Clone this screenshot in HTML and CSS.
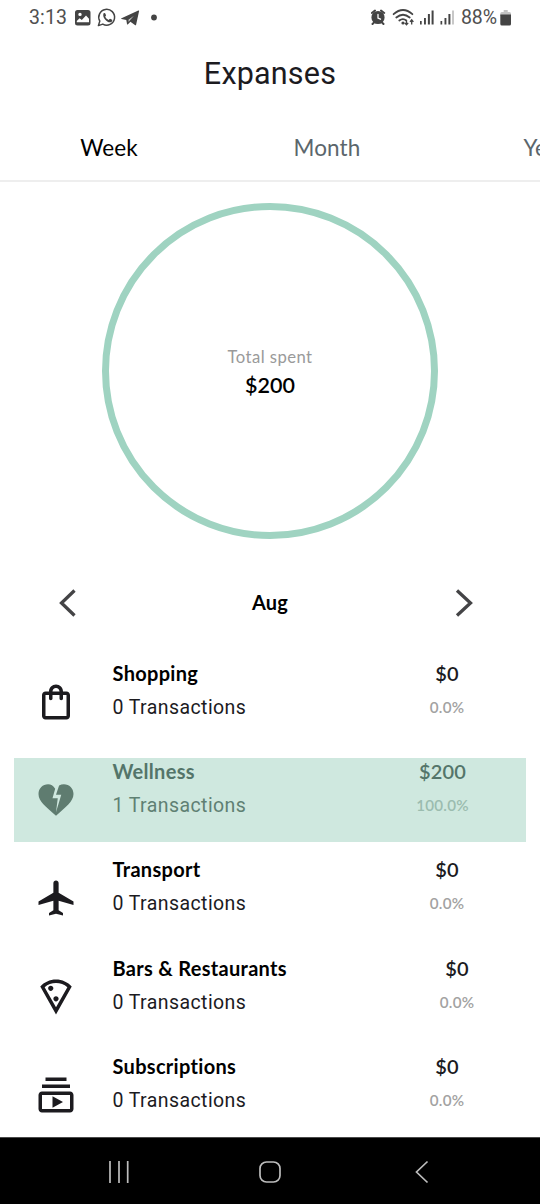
FILE: index.html
```html
<!DOCTYPE html>
<html lang="en">
<head>
<meta charset="utf-8">
<title>Expanses</title>
<link rel="stylesheet" href="styles.css">
</head>
<body>
<div class="screen">
  <header class="status">
    <span class="clock">3:13</span>
    <svg class="status-left" width="90" height="36" viewBox="0 0 90 36" fill="#444">
      <path fill-rule="evenodd" d="M7.500 10h10.500a2.500 2.500 0 0 1 2.500 2.500v10.500a2.500 2.500 0 0 1-2.500 2.500H7.500a2.500 2.500 0 0 1-2.500-2.500V12.500A2.500 2.500 0 0 1 7.500 10zM6.800 22.300h12.200v-3.500l-3-3.300-4.200 4.500-2.200-1.800-2.800 2.700zM10 12.700a1.700 1.700 0 1 0 0 3.400a1.700 1.700 0 0 0 0-3.400z"/>
      <path d="M28.400 25.600l1.400-4.500a7.900 7.900 0 1 1 3 3z" fill="none" stroke="#444" stroke-width="1.500" stroke-linejoin="round"/>
      <path d="M33.500 13.400c.7-.6 1.500-.5 1.800.2l.7 1.700c.1.500-.7 1.200-.8 1.500.8 1.500 1.900 2.500 3.400 3.100.5-.3 1-1.300 1.500-1.200l2 1c.6.300 0 1.700-.7 2.200-3.200 2-9.600-4.200-7.900-8.500z"/>
      <path d="M51.500 18.300L68.300 10.500c.6-.2.900.1.800.6l-3 13.600c-.1.700-.6.800-1.200.4l-4.500-3.300-2.400 2.400c-.5.500-.9.300-1-.3l-.7-3.900-4.800-1.100c-.5-.1-.5-.5 0-.6z"/>
      <path d="M58.500 19.800l5.500-4-4.300 4.800-1 1.400z" fill="#fff" fill-opacity=".75"/>
      <circle cx="84" cy="17.500" r="2.900"/>
    </svg>
    <svg class="status-right" width="86" height="36" viewBox="0 0 86 36" fill="#444">
      <g fill="none" stroke="#444" stroke-width="2" stroke-linecap="round">
        <circle cx="7" cy="17.500" r="5.600" fill="#444"/>
        <path d="M.8 13L4 10.500M13.200 13L10 10.500M3 22.500L1.500 24M11 22.500l1.500 1.500"/>
        <path d="M7 14.500V18l2.500 1.200" stroke="#fff" stroke-width="1.300"/>
        <path d="M22.600 14.200q9.400-8.400 18.800 0M25.300 17.500q6.700-5.500 13.400 0M28.300 20.500q3.700-2.800 7 0" stroke-width="1.800"/>
      </g>
      <circle cx="32" cy="23" r="1.600"/>
      <path d="M35.500 20.500v3.600M33.800 22.800l1.700 2 1.700-2M40.700 24.500v-4.300M39 21.800l1.700-2 1.700 2" fill="none" stroke="#444" stroke-width="1.300"/>
      <path d="M49 21h1.700v3.500H49zM53 18h1.900v6.500H53zM56.900 14h2v10.500h-2zM60.600 10.500h2v14h-2zM69.500 21h1.700v3.500h-1.700zM73.500 18h1.900v6.500h-1.900zM77.400 14h2v10.500h-2z"/>
      <path d="M81 10.500h2v14h-2z" fill="#c8c8c8"/>
    </svg>
    <span class="battery-text">88%</span>
    <svg class="battery" width="12" height="18" viewBox="0 0 12 18">
      <path d="M3.700 1h4v2h1.800q1.500 0 1.500 1.500V7H.3V4.500Q.3 3 1.800 3h1.900z" fill="#c4c4c4"/>
      <path d="M.3 5.500H11v9.600q0 1.500-1.500 1.500H1.800q-1.500 0-1.500-1.500z" fill="#444"/>
    </svg>
  </header>

  <h1 class="title">Expanses</h1>

  <nav class="tabs">
    <span class="tab active">Week</span>
    <span class="tab">Month</span>
    <span class="tab">Year</span>
  </nav>

  <section class="chart">
    <div class="ring">
      <span class="ring-label">Total spent</span>
      <span class="ring-value">$200</span>
    </div>
  </section>

  <div class="period">
    <svg width="18" height="28" viewBox="0 0 18 28"><path d="M16.500 1.500L3.500 14l13 12.500"/></svg>
    <span class="month">Aug</span>
    <svg width="18" height="28" viewBox="0 0 18 28"><path d="M2 1.500L15.500 14 2 26.500"/></svg>
  </div>

  <main class="list">
    <div class="row">
      <svg class="icon" viewBox="0 0 24 24"><path d="M18 6h-2c0-2.210-1.790-4-4-4S8 3.790 8 6H6c-1.100 0-2 .9-2 2v12c0 1.100.9 2 2 2h12c1.100 0 2-.9 2-2V8c0-1.100-.9-2-2-2zm-6-2c1.100 0 2 .9 2 2h-4c0-1.100.9-2 2-2zm6 16H6V8h2v2c0 .55.45 1 1 1s1-.45 1-1V8h4v2c0 .55.45 1 1 1s1-.45 1-1V8h2v12z"/></svg>
      <div class="info"><span class="name">Shopping</span><span class="count">0 Transactions</span></div>
      <div class="amount"><span class="sum">$0</span><span class="share">0.0%</span></div>
    </div>
    <div class="row selected">
      <svg class="icon" viewBox="0 0 24 24"><path d="M16.500 3c-.96 0-1.900.25-2.730.69L12 9h3l-3 10 1-8h-3l1.540-5.390C10.470 3.610 9.010 3 7.500 3 4.420 3 2 5.420 2 8.500c0 4.130 4.160 7.180 10 12.500 5.470-4.940 10-8.260 10-12.500C22 5.420 19.580 3 16.500 3z"/></svg>
      <div class="info"><span class="name">Wellness</span><span class="count">1 Transactions</span></div>
      <div class="amount"><span class="sum">$200</span><span class="share">100.0%</span></div>
    </div>
    <div class="row">
      <svg class="icon" viewBox="0 0 24 24"><path d="M22 16v-2l-8.500-5V3.500c0-.83-.67-1.500-1.500-1.500s-1.500.67-1.500 1.500V9L2 14v2l8.500-2.500V19L8 20.500V22l4-1 4 1v-1.500L13.500 19v-5.500L22 16z"/></svg>
      <div class="info"><span class="name">Transport</span><span class="count">0 Transactions</span></div>
      <div class="amount"><span class="sum">$0</span><span class="share">0.0%</span></div>
    </div>
    <div class="row wide">
      <svg class="icon" viewBox="0 0 24 24"><path d="M12 2C8.430 2 5.230 3.540 3.010 6L12 22l8.990-16C18.780 3.550 15.570 2 12 2zm0 15.920L5.510 6.360C7.320 4.850 9.620 4 12 4s4.680.85 6.490 2.360L12 17.920zM9 5.500c-.83 0-1.500.67-1.500 1.500S8.170 8.500 9 8.500s1.500-.67 1.500-1.500S9.820 5.500 9 5.500zM10.500 13c0 .83.67 1.500 1.500 1.500.82 0 1.500-.67 1.500-1.500s-.68-1.500-1.500-1.500-1.500.67-1.500 1.500z"/></svg>
      <div class="info"><span class="name">Bars &amp; Restaurants</span><span class="count">0 Transactions</span></div>
      <div class="amount"><span class="sum">$0</span><span class="share">0.0%</span></div>
    </div>
    <div class="row">
      <svg class="icon" viewBox="0 0 24 24"><path d="M4 6h16v2H4zm2-4h12v2H6zm14 8H4c-1.100 0-2 .9-2 2v8c0 1.100.9 2 2 2h16c1.100 0 2-.9 2-2v-8c0-1.100-.9-2-2-2zm0 10H4v-8h16v8zm-10-7.270v6.530L16 16z"/></svg>
      <div class="info"><span class="name">Subscriptions</span><span class="count">0 Transactions</span></div>
      <div class="amount"><span class="sum">$0</span><span class="share">0.0%</span></div>
    </div>
  </main>

  <footer class="navbar">
    <svg width="24" height="24" viewBox="0 0 24 24"><path d="M3 1v22M12 1v22M20.700 1v22"/></svg>
    <svg width="24" height="24" viewBox="0 0 24 24"><rect x="2" y="2" width="20" height="20" rx="6.500"/></svg>
    <svg width="24" height="24" viewBox="0 0 24 24"><path d="M18.500 1.500L7.500 12l11 10.500"/></svg>
  </footer>
</div>
</body>
</html>
```
FILE: styles.css
```css
* { box-sizing: border-box; }
body { margin: 0; background: #fff; }
.screen {
  width: 540px;
  height: 1204px;
  overflow: hidden;
  display: flex;
  flex-direction: column;
  background: #fff;
  font-family: Lato, sans-serif;
}
.status {
  display: flex;
  align-items: center;
  height: 36px;
  flex: none;
  padding: 0 28px 0 29px;
  font: 400 19.500px/36px Roboto, sans-serif;
  color: #505050;
}
.clock { width: 41px; letter-spacing: 0.1px; white-space: nowrap; }
.status-right { margin-left: auto; }
.battery-text { margin-left: 4px; width: 38px; white-space: nowrap; letter-spacing: -0.1px; }
.battery { margin-left: 1px; }
.title {
  margin: 0;
  height: 78px;
  flex: none;
  font: 400 30.500px/75px Roboto, sans-serif;
  letter-spacing: 0.2px;
  text-align: center;
  color: #1c1b1f;
}
.tabs {
  display: flex;
  height: 68px;
  flex: none;
  border-bottom: 2px solid #eeeeee;
}
.tab {
  flex: none;
  width: 218px;
  line-height: 68px;
  font-size: 22.500px;
  letter-spacing: 0.1px;
  text-align: center;
  color: #5b666c;
}
.tab.active { color: #000; }
.chart { display: flex; justify-content: center; padding-top: 21px; flex: none; }
.ring {
  display: flex;
  flex-direction: column;
  align-items: center;
  justify-content: center;
  width: 336px;
  height: 336px;
  padding-top: 1px;
  border: 7px solid #9fd3c1;
  border-radius: 50%;
}
.ring-label { font-size: 16.700px; line-height: 27px; letter-spacing: 0.450px; color: #9a9a9a; }
.ring-value { font-size: 21.500px; line-height: 28px; font-weight: 600; color: #000; }
.period {
  display: flex;
  align-items: center;
  justify-content: space-between;
  height: 28px;
  flex: none;
  margin-top: 50px;
  padding: 0 67px 0 58px;
}
.period svg { fill: none; stroke: #444446; stroke-width: 3.300; }
.month { font-size: 20px; font-weight: 700; line-height: 26px; padding-bottom: 2px; margin-left: 9px; letter-spacing: 0.2px; }
.list {
  display: flex;
  flex-direction: column;
  gap: 14.400px;
  padding: 0 14px;
  margin-top: 42.600px;
  height: 477px;
  flex: none;
}
.row { display: flex; height: 84px; flex: none; padding: 0 39px 0 21px; color: #1c1b1f; }
.row.wide { padding-right: 29px; }
.icon { width: 42px; height: 42px; margin-top: 21px; fill: #1c1b1f; flex: none; }
.info { display: flex; flex-direction: column; margin-left: 35.500px; white-space: nowrap; }
.name { font-size: 20px; line-height: 26px; font-weight: 700; letter-spacing: 0.3px; color: #000; }
.count { font: 400 19.500px/32px Roboto, sans-serif; margin-top: 6px; letter-spacing: 0.420px; }
.amount { display: flex; flex-direction: column; align-items: center; margin-left: auto; width: 80px; }
.sum { font-size: 20px; line-height: 26px; font-weight: 600; letter-spacing: 0.1px; }
.share { font-size: 15.200px; line-height: 32px; margin-top: 5px; font-weight: 600; letter-spacing: 0.250px; color: #a2a2a2; }
.selected { background: #cfe8df; padding-right: 43.500px; color: #5f8073; }
.selected .icon { fill: #5f7c70; }
.selected .name, .selected .sum { color: #54756a; }
.selected .share { color: #9bbcaf; }
.navbar {
  display: flex;
  align-items: center;
  justify-content: space-between;
  height: 68px;
  flex: none;
  margin-top: auto;
  padding: 2px 107px 0 107px;
  border-top: 1px solid #4a4a4a;
  background: #000;
}
.navbar svg { fill: none; stroke: #bdbdbd; stroke-width: 1.700; }
```
